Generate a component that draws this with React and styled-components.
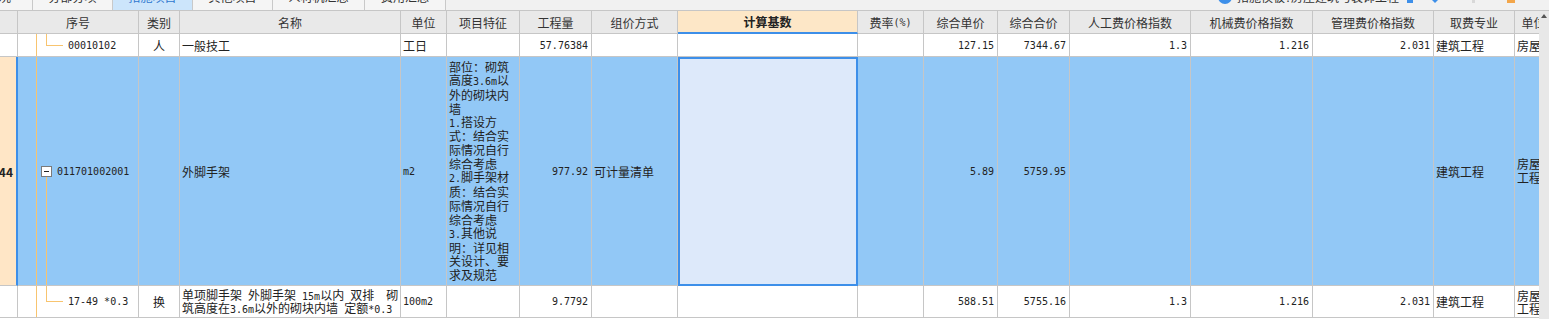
import React from 'react';
import styled, { createGlobalStyle, css } from 'styled-components';

const LINE = '#c6c6c6';
const BLUE = '#3d8fe9';
const TREE = '#f8c46f';

const GlobalStyle = createGlobalStyle`
  html, body { margin: 0; padding: 0; background: #ffffff; }
  body {
    font-family: "Noto Sans CJK SC", "Noto Sans", sans-serif;
    font-size: 12px;
    color: #222;
  }
`;

const COLS = [18, 121, 41, 221, 46, 73, 72, 86, 180, 66, 74, 72, 121, 122, 121, 81, 38];
const GRID = COLS.map((w) => `${w}px`).join(' ');

const Page = styled.div`
  width: 1549px;
  height: 319px;
  overflow: hidden;
  display: flex;
  flex-direction: column;
  background: #fff;
`;

/* ---------- top tab strip ---------- */
const TabBar = styled.div`
  flex: none;
  height: 10px;
  display: flex;
  background: #f1f1f1;
  border-bottom: 1px solid ${LINE};
  overflow: hidden;
`;
const Tab = styled.div`
  flex: none;
  width: ${(p) => p.$w}px;
  box-sizing: border-box;
  border-right: 1px solid #c9c9c9;
  background: ${(p) => (p.$active ? '#cce5fb' : '#f5f5f5')};
  color: ${(p) => (p.$active ? '#2f78cf' : '#333')};
  display: flex;
  justify-content: ${(p) => (p.$clipStart ? 'flex-end' : 'center')};
  ${(p) => p.$clipStart && css`padding-right: 21px;`}
  overflow: hidden;
  white-space: nowrap;
  line-height: 12px;
`;
const TabLabel = styled.span`
  flex: none;
  margin-top: -9px;
`;
const Spacer = styled.div`
  flex: 1;
`;
const Info = styled.div`
  flex: none;
  width: 331px;
  display: flex;
  align-items: flex-start;
  white-space: nowrap;
  line-height: 12px;
  color: #333;
`;
const InfoDot = styled.span`
  flex: none;
  width: 14px;
  height: 14px;
  margin-top: -10px;
  border-radius: 50%;
  background: ${BLUE};
`;
const InfoLabel = styled.span`
  flex: none;
  width: 165px;
  margin-left: 5px;
  margin-top: -9px;
  overflow: hidden;
`;
const InfoMark = styled.span`
  flex: none;
  margin-left: ${(p) => p.$ml}px;
  width: ${(p) => p.$w}px;
  height: 3px;
  background: ${(p) => p.$color};
`;
const InfoCaret = styled.span`
  flex: none;
  margin-left: 19px;
  width: 0;
  height: 0;
  border-left: 3px solid transparent;
  border-right: 3px solid transparent;
  border-top: 3px solid ${BLUE};
`;

/* ---------- grid ---------- */
const Body = styled.div`
  flex: 1;
  min-height: 0;
  display: flex;
`;
const GridArea = styled.div`
  flex: 1;
  min-width: 0;
  overflow: hidden;
`;
const Scrollbar = styled.div`
  flex: none;
  width: 10px;
  background: #e8e8e8;
  position: relative;
`;
const ScrollArrow = styled.span`
  position: absolute;
  top: 3px;
  left: 2px;
  width: 0;
  height: 0;
  border-left: 3px solid transparent;
  border-right: 3px solid transparent;
  border-bottom: 4px solid #555;
`;

const Row = styled.div`
  display: grid;
  grid-template-columns: ${GRID};
  height: ${(p) => p.$h}px;
  background: ${(p) => p.$bg || '#ffffff'};
`;

const Cell = styled.div`
  box-sizing: border-box;
  position: relative;
  min-width: 0;
  overflow: hidden;
  white-space: nowrap;
  display: flex;
  align-items: ${(p) => (p.$top ? 'flex-start' : 'center')};
  justify-content: ${(p) =>
    p.$align === 'right' ? 'flex-end' : p.$align === 'center' ? 'center' : 'flex-start'};
  padding: ${(p) => (p.$top ? '3px 2px 0 2px' : p.$align === 'right' ? '0 3px 0 2px' : '0 2px')};
  ${(p) => p.$indent != null && css`padding-left: ${p.$indent}px;`}
  border-right: 1px solid ${LINE};
  border-bottom: 1px solid ${LINE};
  background: ${(p) => p.$bg || 'transparent'};
`;

const HeadCell = styled(Cell)`
  justify-content: center;
  color: #333;
  background: #e9e9e9;
`;
const ActiveHead = styled(HeadCell)`
  background: #fde7c7;
  font-weight: bold;
  color: #222;
  border-bottom: 2px solid ${BLUE};
`;
const IndexCell = styled(Cell)`
  background: #ffe6c6;
  font-weight: bold;
  justify-content: flex-end;
  padding: 0 3px 0 0;
  border-right: 2px solid ${BLUE};
`;
const ActiveCell = styled(Cell)`
  background: #dde9fa;
  outline: 2px solid ${BLUE};
  outline-offset: -2px;
`;

const Lines = styled.div`
  display: grid;
  grid-auto-rows: ${(p) => p.$lh}px;
  line-height: ${(p) => p.$lh}px;
  white-space: nowrap;
`;
const LineText = styled.div`
  display: flex;
  align-items: center;
`;

const Half = styled.span`
  font-family: "DejaVu Sans Mono", "Liberation Mono", monospace;
  font-size: 10px;
  white-space: pre;
`;

/* ---------- tree connectors ---------- */
const Trunk = styled.span`
  position: absolute;
  left: 18px;
  top: 0;
  bottom: -1px;
  width: 1px;
  background: ${TREE};
  z-index: 1;
`;
const ElbowV = styled.span`
  position: absolute;
  left: 28px;
  top: ${(p) => p.$top || 0}px;
  ${(p) => (p.$h != null ? css`height: ${p.$h}px;` : css`bottom: -1px;`)}
  width: 1px;
  background: ${TREE};
  z-index: 1;
`;
const ElbowH = styled.span`
  position: absolute;
  left: 28px;
  top: ${(p) => p.$top}px;
  width: 17px;
  height: 1px;
  background: ${TREE};
  z-index: 1;
`;
const Toggle = styled.span`
  position: absolute;
  left: 23px;
  top: 109px;
  width: 11px;
  height: 11px;
  box-sizing: border-box;
  border: 1px solid #7a7a7a;
  background: #fff;
  z-index: 2;
  &::after {
    content: '';
    position: absolute;
    left: 2px;
    top: 4px;
    width: 5px;
    height: 1px;
    background: #222;
  }
`;

function Mixed({ text }) {
  if (!text) return null;
  const parts = text.split(/([\x20-\x7e]+)/);
  return parts.map((p, i) =>
    p === '' ? null : /^[\x20-\x7e]+$/.test(p) ? (
      <Half key={i}>{p}</Half>
    ) : (
      <React.Fragment key={i}>{p}</React.Fragment>
    )
  );
}

function MultiLine({ lines, lh }) {
  return (
    <Lines $lh={lh}>
      {lines.map((l, i) => (
        <LineText key={i}>
          <span>
            <Mixed text={l} />
          </span>
        </LineText>
      ))}
    </Lines>
  );
}

const HEADERS = [
  '', '序号', '类别', '名称', '单位', '项目特征', '工程量', '组价方式', '计算基数', '费率(%)',
  '综合单价', '综合合价', '人工费价格指数', '机械费价格指数', '管理费价格指数', '取费专业', '单位',
];

const FEATURES = [
  '部位：砌筑', '高度3.6m以', '外的砌块内', '墙', '1.搭设方', '式：结合实', '际情况自行', '综合考虑',
  '2.脚手架材', '质：结合实', '际情况自行', '综合考虑', '3.其他说', '明：详见相', '关设计、要', '求及规范',
];

const TABS = [
  { w: 33, label: '概况', clip: true },
  { w: 80, label: '分部分项' },
  { w: 80, label: '措施项目', active: true },
  { w: 80, label: '其他项目' },
  { w: 92, label: '人材机汇总' },
  { w: 81, label: '费用汇总' },
];

function TextCell({ t, a }) {
  return (
    <Cell $align={a}>
      <Mixed text={t} />
    </Cell>
  );
}

function PriceCells({ cols }) {
  return cols.map((c, i) => <TextCell key={i} t={c.t} a={c.a} />);
}

export default function App() {
  return (
    <>
      <GlobalStyle />
      <Page>
        <TabBar>
          {TABS.map((t) => (
            <Tab key={t.label} $w={t.w} $active={t.active} $clipStart={t.clip}>
              <TabLabel>{t.label}</TabLabel>
            </Tab>
          ))}
          <Spacer />
          <Info>
            <InfoDot />
            <InfoLabel>
              措施模板<Half>:</Half>房屋建筑与装饰工程
            </InfoLabel>
            <InfoMark $ml={5} $w={6} $color={BLUE} />
            <InfoCaret />
            <InfoMark $ml={34} $w={3} $color="#d8d8d8" />
            <InfoMark $ml={32} $w={8} $color="#f3a64a" />
          </Info>
        </TabBar>
        <Body>
          <GridArea>
            <Row $h={23}>
              {HEADERS.map((h, i) =>
                i === 8 ? (
                  <ActiveHead key={i}>{h}</ActiveHead>
                ) : (
                  <HeadCell key={i}>
                    <Mixed text={h} />
                  </HeadCell>
                )
              )}
            </Row>

            {/* row 1 */}
            <Row $h={23}>
              <Cell />
              <Cell $indent={50}>
                <Trunk />
                <ElbowV $h={11} />
                <ElbowH $top={11} />
                <Mixed text="00010102" />
              </Cell>
              <TextCell t="人" a="center" />
              <TextCell t="一般技工" />
              <TextCell t="工日" />
              <Cell />
              <TextCell t="57.76384" a="right" />
              <Cell />
              <Cell />
              <Cell />
              <PriceCells
                cols={[
                  { t: '127.15', a: 'right' },
                  { t: '7344.67', a: 'right' },
                  { t: '1.3', a: 'right' },
                  { t: '1.216', a: 'right' },
                  { t: '2.031', a: 'right' },
                  { t: '建筑工程' },
                  { t: '房屋工程' },
                ]}
              />
            </Row>

            {/* row 2 (selected) */}
            <Row $h={229} $bg="#92c8f6">
              <IndexCell>44</IndexCell>
              <Cell $indent={39}>
                <Trunk />
                <Toggle />
                <ElbowV $top={120} />
                <Mixed text="011701002001" />
              </Cell>
              <Cell />
              <TextCell t="外脚手架" />
              <TextCell t="m2" />
              <Cell $top>
                <MultiLine lines={FEATURES} lh={13.9} />
              </Cell>
              <TextCell t="977.92" a="right" />
              <TextCell t="可计量清单" />
              <ActiveCell />
              <Cell />
              <PriceCells
                cols={[
                  { t: '5.89', a: 'right' },
                  { t: '5759.95', a: 'right' },
                  { t: '' },
                  { t: '' },
                  { t: '' },
                  { t: '建筑工程' },
                ]}
              />
              <Cell>
                <MultiLine lines={['房屋', '工程']} lh={14} />
              </Cell>
            </Row>

            {/* row 3 */}
            <Row $h={32}>
              <Cell />
              <Cell $indent={50}>
                <Trunk />
                <ElbowV $h={15} />
                <ElbowH $top={15} />
                <Mixed text="17-49 *0.3" />
              </Cell>
              <TextCell t="换" a="center" />
              <Cell>
                <MultiLine
                  lines={['单项脚手架 外脚手架 15m以内 双排  砌', '筑高度在3.6m以外的砌块内墙 定额*0.3']}
                  lh={13}
                />
              </Cell>
              <TextCell t="100m2" />
              <Cell />
              <TextCell t="9.7792" a="right" />
              <Cell />
              <Cell />
              <Cell />
              <PriceCells
                cols={[
                  { t: '588.51', a: 'right' },
                  { t: '5755.16', a: 'right' },
                  { t: '1.3', a: 'right' },
                  { t: '1.216', a: 'right' },
                  { t: '2.031', a: 'right' },
                  { t: '建筑工程' },
                ]}
              />
              <Cell>
                <MultiLine lines={['房屋', '工程']} lh={13} />
              </Cell>
            </Row>
          </GridArea>
          <Scrollbar>
            <ScrollArrow />
          </Scrollbar>
        </Body>
      </Page>
    </>
  );
}
